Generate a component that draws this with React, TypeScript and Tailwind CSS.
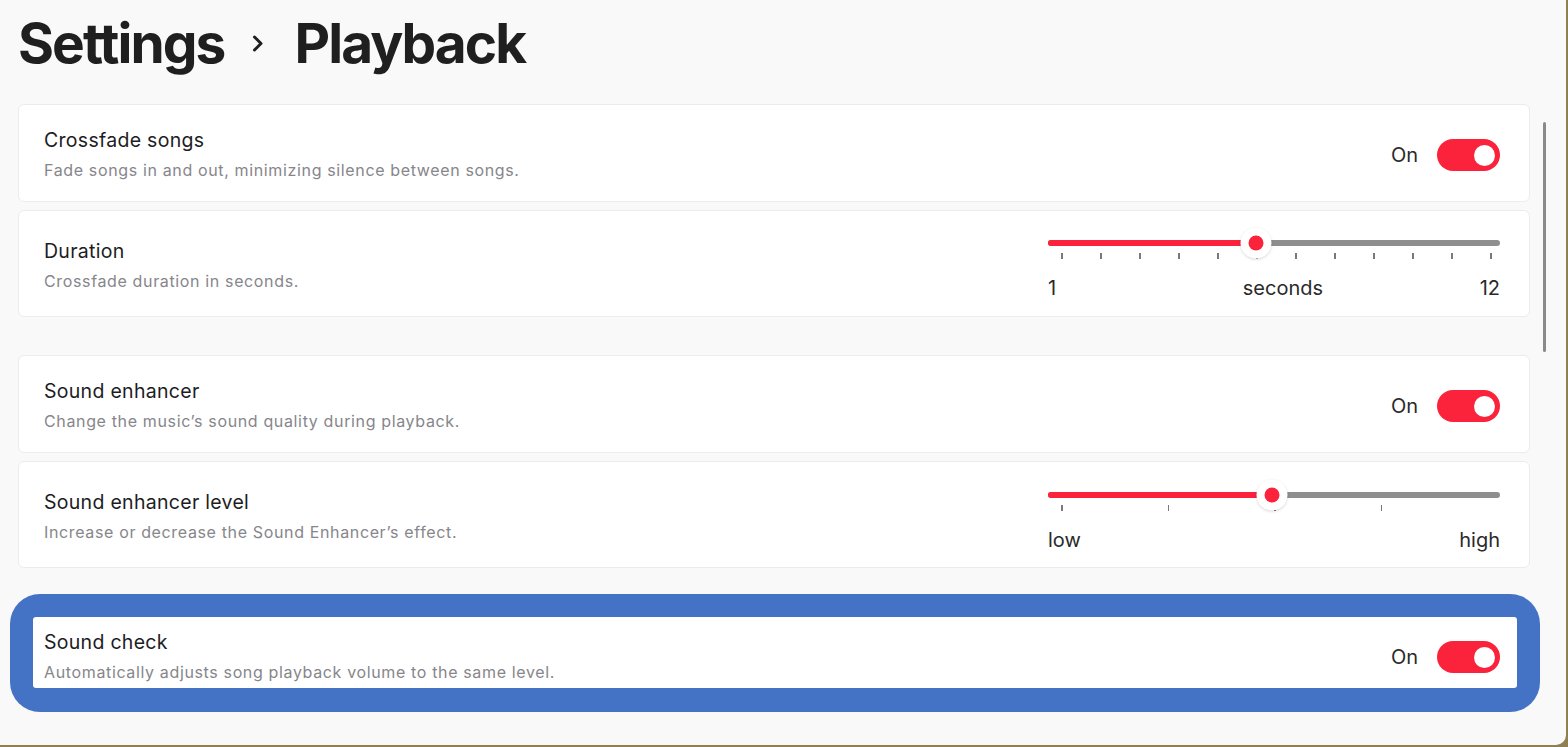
import React from 'react'

const font = { fontFamily: 'Inter, "Noto Sans", sans-serif' }

function Toggle() {
  return (
    <div className="flex items-center gap-[19px]">
      <span className="text-[20px] text-[#2a2a2a]">On</span>
      <div className="flex h-[32px] w-[63px] items-center justify-end rounded-full bg-[#fa233b] pr-[5px]">
        <div className="h-[21px] w-[21px] rounded-full bg-white" />
      </div>
    </div>
  )
}

function Slider({
  fill,
  ticks,
  tickGap,
  left,
  mid,
  right,
}: {
  fill: number
  ticks: number
  tickGap: string
  left: string
  mid?: string
  right: string
}) {
  return (
    <div className="flex w-[452px] flex-col">
      <div className="relative h-[6px] rounded-full bg-[#8e8e8e]">
        <div className="h-full rounded-full bg-[#fa233b]" style={{ width: fill }} />
        <div
          className="absolute top-1/2 flex h-[31px] w-[31px] -translate-x-1/2 -translate-y-1/2 items-center justify-center rounded-full bg-white shadow-[0_1px_3px_rgba(0,0,0,0.15)]"
          style={{ left: fill }}
        >
          <div className="h-[15px] w-[15px] rounded-full bg-[#fa233b]" />
        </div>
      </div>
      <div className={`mt-[7px] flex h-[6px] pl-[13px] ${tickGap}`}>
        {Array.from({ length: ticks }).map((_, i) => (
          <div key={i} className="h-[6px] w-[1.5px] bg-[#7a7a7a]" />
        ))}
      </div>
      <div className="mt-[19px] flex text-[20px] leading-none text-[#2a2a2a]">
        <span>{left}</span>
        <span className="flex-1 pl-[30px] text-center">{mid}</span>
        <span>{right}</span>
      </div>
    </div>
  )
}

function Text({ title, sub }: { title: string; sub: string }) {
  return (
    <div className="flex flex-col gap-[10px]">
      <div className="text-[19.5px] leading-[20px] tracking-[0.015em] text-[#1d1d1f]">{title}</div>
      <div className="text-[16px] leading-[20px] tracking-[0.04em] text-[#86868b]">{sub}</div>
    </div>
  )
}

function ToggleCard({ title, sub }: { title: string; sub: string }) {
  return (
    <div className="flex h-[98px] items-center justify-between rounded-[6px] border border-[#ececec] bg-white pl-[25px] pr-[29px] pt-[4px]">
      <Text title={title} sub={sub} />
      <Toggle />
    </div>
  )
}

function SliderCard({
  title,
  sub,
  top,
  children,
}: {
  title: string
  sub: string
  top: string
  children: React.ReactNode
}) {
  return (
    <div className="flex h-[107px] items-center justify-between rounded-[6px] border border-[#ececec] bg-white pl-[25px] pr-[29px]">
      <div className="pt-[4px]">
        <Text title={title} sub={sub} />
      </div>
      <div className={`self-start ${top}`}>{children}</div>
    </div>
  )
}

export default function App() {
  return (
    <div className="h-[747px] w-full bg-[#8f7f52]" style={font}>
      <div className="flex h-[745px] w-[1566px] rounded-br-[10px] bg-[#f9f9f9]">
        <div className="flex flex-1 flex-col pl-[18px]">
          <div className="flex items-center pt-[16px] text-[55px] font-bold leading-none tracking-[-0.035em] text-[#1f1f1f]">
            <span>Settings</span>
            <svg className="ml-[28px] mr-[30px]" width="12" height="19" viewBox="0 0 12 19">
              <polyline points="2.5,3 9,9.5 2.5,16" fill="none" stroke="#1f1f1f" strokeWidth="3" strokeLinecap="round" strokeLinejoin="round" />
            </svg>
            <span>Playback</span>
          </div>

          <div className="mt-[33px] flex flex-col gap-[8px]">
            <ToggleCard title="Crossfade songs" sub="Fade songs in and out, minimizing silence between songs." />
            <SliderCard title="Duration" sub="Crossfade duration in seconds." top="pt-[29px]">
              <Slider fill={208} ticks={12} tickGap="gap-[37.5px]" left="1" mid="seconds" right="12" />
            </SliderCard>
          </div>

          <div className="mt-[38px] flex flex-col gap-[8px]">
            <ToggleCard title="Sound enhancer" sub="Change the music’s sound quality during playback." />
            <SliderCard title="Sound enhancer level" sub="Increase or decrease the Sound Enhancer’s effect." top="pt-[30px]">
              <Slider fill={224} ticks={4} tickGap="gap-[105px]" left="low" right="high" />
            </SliderCard>
          </div>

          <div className="mt-[26px] -ml-[8px] -mr-[10px] rounded-[30px] bg-[#4472c4] px-[23px] pt-[23px] pb-[24px]">
            <div className="flex h-[71px] items-center justify-between rounded-[3px] bg-white pl-[11px] pr-[17px] pt-[9px]">
              <Text title="Sound check" sub="Automatically adjusts song playback volume to the same level." />
              <Toggle />
            </div>
          </div>
        </div>

        <div className="ml-[13px] mr-[20px] mt-[122px] h-[230px] w-[3px] rounded-full bg-[#8a8a8a]" />
      </div>
    </div>
  )
}
